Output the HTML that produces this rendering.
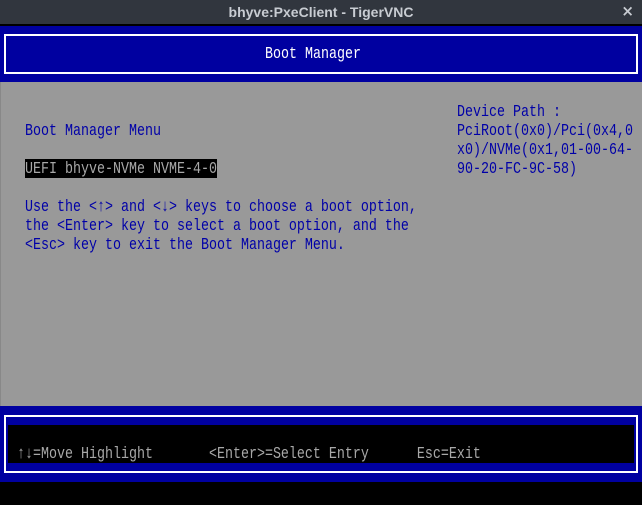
<!DOCTYPE html>
<html><head><style>
*{margin:0;padding:0;box-sizing:border-box}
body{width:642px;height:505px;overflow:hidden;background:#000;position:relative;font-family:"Liberation Mono",monospace}
.t{position:absolute;white-space:pre;font-size:17px;line-height:19px;transform:scaleX(0.784);transform-origin:0 0;font-weight:normal}
.b{color:#0000a8}
.g{color:#a8a8a8}
</style></head><body>
<div style="position:absolute;left:0;top:0;width:642px;height:24px;background:#31363e;color:#c8ccd2;font:bold 14px 'Liberation Sans',sans-serif;text-align:center;line-height:24px">bhyve:PxeClient - TigerVNC</div>
<div style="position:absolute;right:8px;top:2px;color:#c8ccd2;font:bold 15px 'DejaVu Sans',sans-serif">×</div>
<div style="position:absolute;left:0;top:24px;width:642px;height:2px;background:#000"></div>
<div style="position:absolute;left:0;top:26px;width:642px;height:56px;background:#0000a0"></div>
<div style="position:absolute;left:4px;top:34px;width:634px;height:40px;border:2px solid #fff"></div>
<div class="t" style="left:265px;top:45px;color:#fff">Boot Manager</div>
<div style="position:absolute;left:0;top:82px;width:642px;height:324px;background:#999;border-left:1px solid #888"></div>
<div class="t b" style="left:25px;top:122px">Boot Manager Menu</div>
<div style="position:absolute;left:25px;top:159px;width:192px;height:19px;background:#000"></div>
<div class="t g" style="left:25px;top:160px">UEFI bhyve-NVMe NVME-4-0</div>
<div class="t b" style="left:25px;top:198px">Use the &lt;↑&gt; and &lt;↓&gt; keys to choose a boot option,
the &lt;Enter&gt; key to select a boot option, and the
&lt;Esc&gt; key to exit the Boot Manager Menu.</div>
<div class="t b" style="left:457px;top:103px">Device Path :
PciRoot(0x0)/Pci(0x4,0
x0)/NVMe(0x1,01-00-64-
90-20-FC-9C-58)</div>
<div style="position:absolute;left:0;top:406px;width:642px;height:76px;background:#0000a0"></div>
<div style="position:absolute;left:4px;top:415px;width:634px;height:58px;border:2px solid #fff"></div>
<div style="position:absolute;left:8px;top:425px;width:626px;height:38px;background:#000"></div>
<div class="t g" style="left:17px;top:445px">↑↓=Move Highlight       &lt;Enter&gt;=Select Entry      Esc=Exit</div>
</body></html>
